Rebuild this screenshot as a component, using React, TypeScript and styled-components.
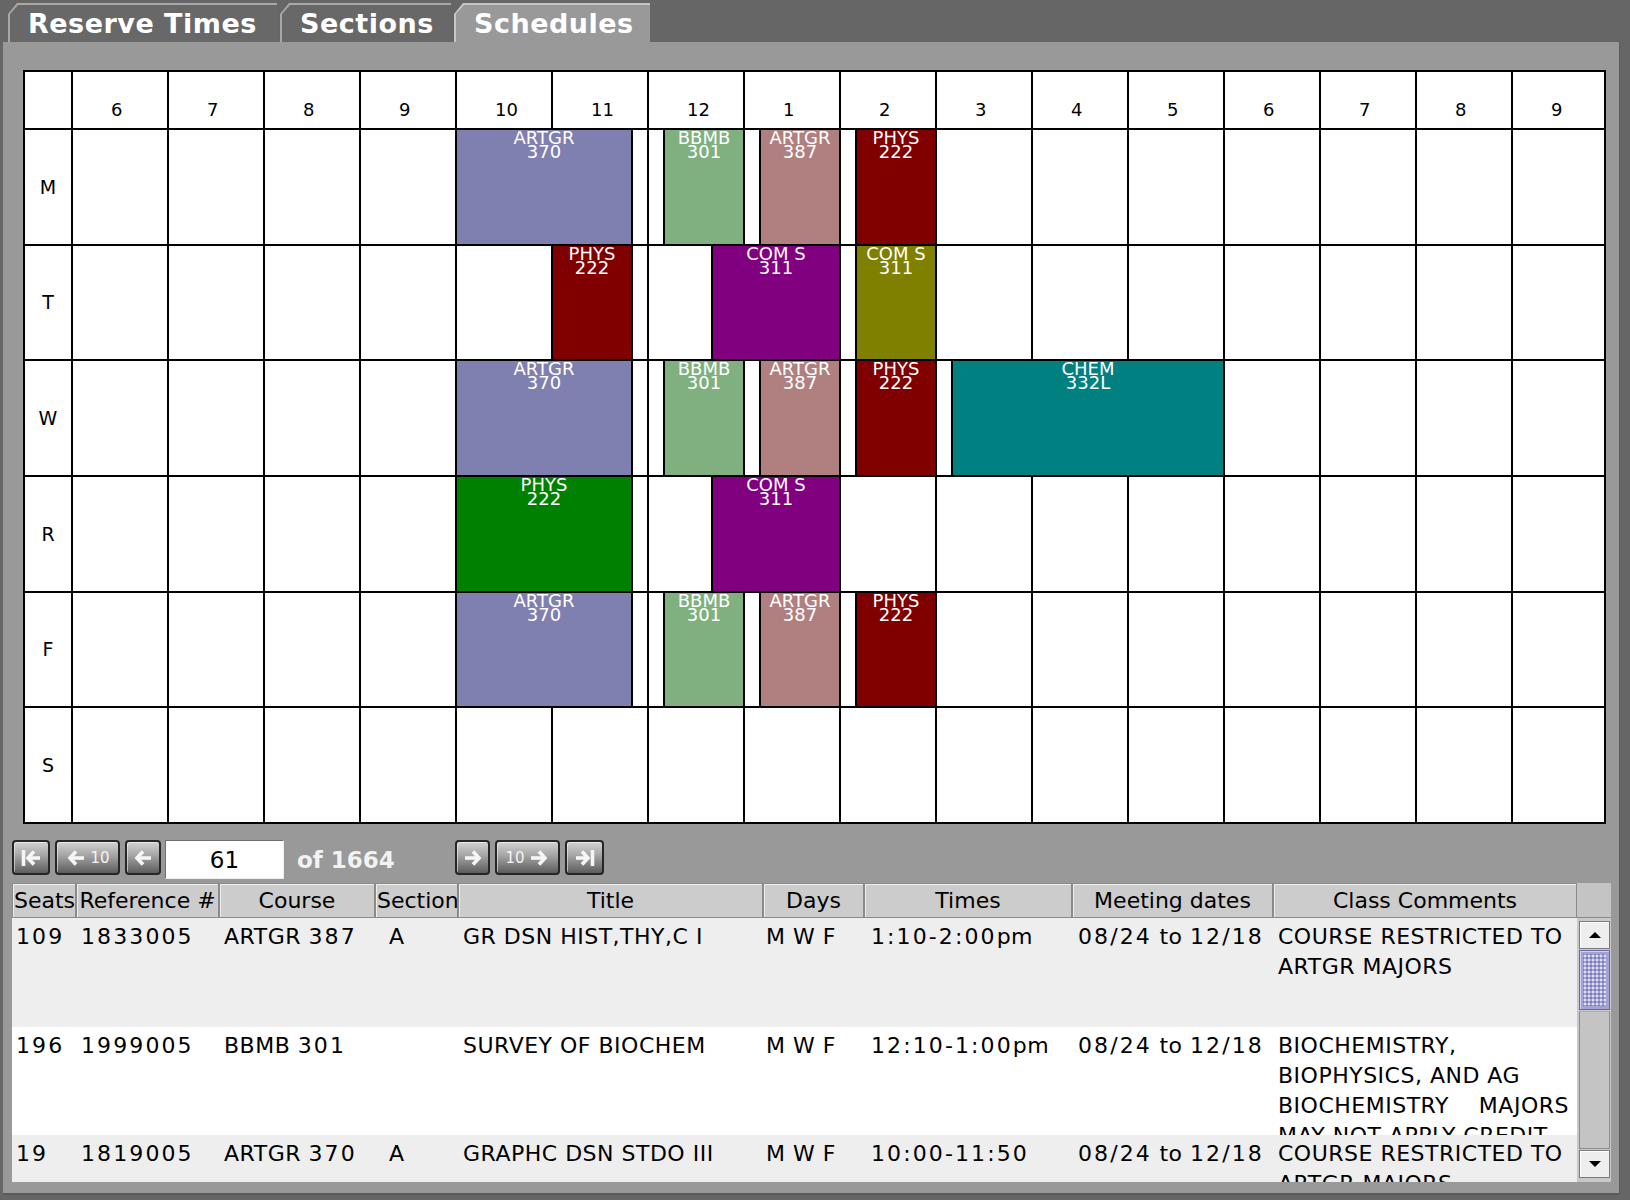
import React from 'react';
import styled, { createGlobalStyle } from 'styled-components';

const GlobalStyle = createGlobalStyle`
  html, body { margin: 0; padding: 0; background: #666666; }
  body { width: 1630px; height: 1200px; overflow: hidden; font-family: "DejaVu Sans", sans-serif; }
  #root { width: 1630px; height: 1200px; }
`;

const Window = styled.div`
  width: 1630px;
  height: 1200px;
  display: flex;
  flex-direction: column;
  background: #666666;
`;

const TabStrip = styled.div`
  display: flex;
  align-items: flex-end;
  gap: 3px;
  height: 42px;
  box-sizing: border-box;
  padding: 3px 0 0 8px;
`;

const TabFrame = styled.div<{ $w: number; $active?: boolean }>`
  width: ${(p) => p.$w}px;
  height: 39px;
  box-sizing: border-box;
  padding: 2px 0 0 2px;
  background: ${(p) => (p.$active ? '#c6c6c6' : '#a8a8a8')};
  clip-path: polygon(0 11px, 9px 0, 100% 0, 100% 100%, 0 100%);
`;

const TabFace = styled.div<{ $active?: boolean }>`
  height: 100%;
  box-sizing: border-box;
  background: ${(p) => (p.$active ? '#999999' : '#686868')};
  clip-path: polygon(0 9px, 8px 0, 100% 0, 100% 100%, 0 100%);
  display: flex;
  align-items: center;
  padding: 0 0 1px 18px;
  color: #ffffff;
  font: bold 27px "DejaVu Sans", sans-serif;
  letter-spacing: 0.5px;
  white-space: nowrap;
`;

const Panel = styled.div`
  margin-left: 3px;
  width: 1617px;
  height: 1153px;
  box-sizing: border-box;
  background: #999999;
  border-right: 1px solid #5a5a5a;
  border-bottom: 2px solid #5a5a5a;
  padding-top: 28px;
  display: flex;
  flex-direction: column;
`;

/* ---------- schedule grid ---------- */

const GRID_W = 1583;
const GRID_H = 754;
const COL_W = 94;
const P = COL_W + 2;
const ROW_H = (GRID_H - 4 - 56 - 12) / 6;
const Q = ROW_H + 2;

const Schedule = styled.div`
  position: relative;
  margin-left: 20px;
  width: ${GRID_W}px;
  height: ${GRID_H}px;
  box-sizing: border-box;
  padding: 2px;
  gap: 2px;
  display: grid;
  grid-template-columns: 46px repeat(15, ${COL_W}px) 1fr;
  grid-template-rows: 56px repeat(6, 1fr);
  background: #000000;
`;

const Cell = styled.div`
  background: #ffffff;
`;

const HourCell = styled(Cell)`
  display: flex;
  align-items: flex-end;
  justify-content: flex-start;
  padding: 0 0 9px 38px;
  box-sizing: border-box;
  font: 18px "DejaVu Sans", sans-serif;
  line-height: 18px;
  color: #000;
`;

const DayCell = styled(Cell)`
  display: flex;
  align-items: center;
  justify-content: center;
  font: 19px "DejaVu Sans", sans-serif;
  color: #000;
`;

const CourseBlock = styled.div<{ $bg: string }>`
  position: absolute;
  box-sizing: border-box;
  border: 2px solid #000;
  background: ${(p) => p.$bg};
  color: #ffffff;
  font: 18px "DejaVu Sans", sans-serif;
  line-height: 14px;
  padding-top: 1px;
  text-align: center;
  white-space: pre;
  overflow: hidden;
`;

/* ---------- navigation ---------- */

const NavBar = styled.div`
  display: flex;
  align-items: flex-start;
  margin: 16px 0 0 9px;
  height: 39px;
`;

const NavButton = styled.div<{ $w: number; $ml?: number }>`
  width: ${(p) => p.$w}px;
  height: 35px;
  margin-left: ${(p) => p.$ml ?? 0}px;
  box-sizing: border-box;
  border: 2px solid #262626;
  border-radius: 4px;
  background: linear-gradient(to bottom, #d2d2d2 0%, #a9a9a9 40%, #7c7c7c 75%, #5e5e5e 100%);
  box-shadow: inset 1px 1px 0 rgba(255, 255, 255, 0.5);
  display: flex;
  align-items: center;
  justify-content: center;
  gap: 3px;
  color: #f4f4f4;
  font: 15px "DejaVu Sans", sans-serif;
`;

const PageField = styled.div`
  width: 119px;
  height: 39px;
  margin-left: 4px;
  box-sizing: border-box;
  background: #ffffff;
  border: 1px solid #6e6e6e;
  border-right-color: #eeeeee;
  border-bottom-color: #eeeeee;
  display: flex;
  align-items: center;
  justify-content: center;
  font: 23px "DejaVu Sans", sans-serif;
  color: #000;
`;

const PageCount = styled.div`
  width: 171px;
  box-sizing: border-box;
  padding: 7px 0 0 13px;
  color: #f2f2f2;
  font: bold 23px "DejaVu Sans", sans-serif;
  white-space: nowrap;
`;

/* ---------- results table ---------- */

const Table = styled.div`
  margin: 4px 0 0 9px;
  width: 1599px;
  display: flex;
  flex-direction: column;
`;

const HeaderRow = styled.div`
  display: flex;
  height: 35px;
`;

const HeaderCell = styled.div<{ $w: number }>`
  width: ${(p) => p.$w}px;
  flex: none;
  box-sizing: border-box;
  background: #cccccc;
  border: 1px solid #8a8a8a;
  box-shadow: inset 1px 1px 0 #eeeeee;
  overflow: hidden;
  white-space: nowrap;
  text-align: center;
  padding: 3px 1px 0 1px;
  font: 22px "DejaVu Sans", sans-serif;
  line-height: 28px;
  color: #000;
`;

const HeaderCorner = styled.div`
  flex: 1;
  background: #c4c4c4;
  border-bottom: 1px solid #8a8a8a;
`;

const Body = styled.div`
  display: flex;
  height: 264px;
`;

const Rows = styled.div`
  width: 1565px;
  flex: none;
  overflow: hidden;
  display: flex;
  flex-direction: column;
`;

const Row = styled.div<{ $h: number; $bg: string }>`
  height: ${(p) => p.$h}px;
  flex: none;
  display: flex;
  background: ${(p) => p.$bg};
`;

const DataCell = styled.div<{ $w: number; $indent: number }>`
  width: ${(p) => p.$w}px;
  flex: none;
  box-sizing: border-box;
  padding: 4px 0 0 ${(p) => p.$indent}px;
  overflow: hidden;
  white-space: pre;
  font: 22px "DejaVu Sans", sans-serif;
  letter-spacing: 0.5px;
  line-height: 30px;
  color: #000;
`;

const Num = styled.span`
  letter-spacing: 2.1px;
`;

const ScrollBar = styled.div`
  flex: 1;
  box-sizing: border-box;
  background: #c8c8c8;
  padding: 3px 1px 4px 2px;
  display: flex;
  flex-direction: column;
`;

const ScrollButton = styled.div`
  height: 28px;
  flex: none;
  box-sizing: border-box;
  background: #eeeeee;
  border: 1px solid #7a7a7a;
  box-shadow: inset 1px 1px 0 #ffffff;
  display: flex;
  align-items: center;
  justify-content: center;
`;

const Triangle = styled.div<{ $up?: boolean }>`
  width: 0;
  height: 0;
  border-left: 6px solid transparent;
  border-right: 6px solid transparent;
  ${(p) => (p.$up ? 'border-bottom: 6px solid #000;' : 'border-top: 6px solid #000;')}
`;

const Thumb = styled.div`
  height: 60px;
  flex: none;
  margin-top: 1px;
  box-sizing: border-box;
  border: 1px solid #6a6aa0;
  background-color: #a2a2d4;
  background-image: radial-gradient(circle, rgba(230, 230, 255, 0.9) 0.7px, transparent 1px),
    radial-gradient(circle, rgba(100, 100, 160, 0.6) 0.7px, transparent 1px);
  background-size: 4px 4px, 4px 4px;
  background-position: 3px 3px, 5px 5px;
  box-shadow: inset 1px 1px 0 #d0d0f0, inset 0 0 0 3px #a2a2d4;
`;

const Track = styled.div`
  flex: 1;
  box-sizing: border-box;
  margin: 1px 0;
  background: #c4c4c4;
  border: 1px solid #8c8c8c;
  border-top-color: #b0b0b0;
`;

/* ---------- icons ---------- */

const ArrowIcon: React.FC<{ dir: 'left' | 'right'; bar?: boolean }> = ({ dir, bar }) => (
  <svg width="22" height="22" viewBox="0 0 22 22" style={{ transform: dir === 'right' ? 'scaleX(-1)' : undefined }}>
    <g stroke="#f6f6f6" strokeWidth="3.6" fill="none" strokeLinecap="butt" strokeLinejoin="miter">
      {bar && <path d="M3.5 3 V19" />}
      <path d={bar ? 'M8 11 H20' : 'M5 11 H19'} />
      <path d={bar ? 'M14 4.5 L8 11 L14 17.5' : 'M11 4.5 L5 11 L11 17.5'} />
    </g>
  </svg>
);

/* ---------- data ---------- */

const HOURS = ['6', '7', '8', '9', '10', '11', '12', '1', '2', '3', '4', '5', '6', '7', '8', '9'];
const DAYS = ['M', 'T', 'W', 'R', 'F', 'S'];

type Slot = { day: number; from: string; to: string; label: string; color: string };

const toOffset = (t: string) => {
  const [h, m] = t.split(':').map(Number);
  return h - 6 + m / 60;
};

const MWF: Omit<Slot, 'day'>[] = [
  { from: '10:00', to: '11:50', label: 'ARTGR\n370', color: '#8080b0' },
  { from: '12:10', to: '13:00', label: 'BBMB\n301', color: '#80b080' },
  { from: '13:10', to: '14:00', label: 'ARTGR\n387', color: '#b08080' },
  { from: '14:10', to: '15:00', label: 'PHYS\n222', color: '#800000' },
];

const SLOTS: Slot[] = [
  ...[0, 2, 4].flatMap((day) => MWF.map((s) => ({ ...s, day }))),
  { day: 2, from: '15:10', to: '18:00', label: 'CHEM\n332L', color: '#008080' },
  { day: 1, from: '11:00', to: '11:50', label: 'PHYS\n222', color: '#800000' },
  { day: 1, from: '12:40', to: '14:00', label: 'COM S\n311', color: '#800080' },
  { day: 1, from: '14:10', to: '15:00', label: 'COM S\n311', color: '#808000' },
  { day: 3, from: '10:00', to: '11:50', label: 'PHYS\n222', color: '#008000' },
  { day: 3, from: '12:40', to: '14:00', label: 'COM S\n311', color: '#800080' },
];

const COLUMNS = [
  { title: 'Seats', w: 64, indent: 4 },
  { title: 'Reference #', w: 143, indent: 5 },
  { title: 'Course', w: 156, indent: 5 },
  { title: 'Section', w: 83, indent: 14 },
  { title: 'Title', w: 305, indent: 5 },
  { title: 'Days', w: 101, indent: 3 },
  { title: 'Times', w: 208, indent: 7 },
  { title: 'Meeting dates', w: 201, indent: 6 },
  { title: 'Class Comments', w: 304, indent: 5 },
];

const ROWS = [
  {
    h: 109,
    bg: '#eeeeee',
    cells: ['109', '1833005', 'ARTGR 387', 'A', 'GR DSN HIST,THY,C I', 'M W F', '1:10-2:00pm', '08/24 to 12/18', 'COURSE RESTRICTED TO\nARTGR MAJORS'],
  },
  {
    h: 108,
    bg: '#ffffff',
    cells: ['196', '1999005', 'BBMB 301', '', 'SURVEY OF BIOCHEM', 'M W F', '12:10-1:00pm', '08/24 to 12/18', 'BIOCHEMISTRY,\nBIOPHYSICS, AND AG\nBIOCHEMISTRY    MAJORS\nMAY NOT APPLY CREDIT'],
  },
  {
    h: 60,
    bg: '#eeeeee',
    cells: ['19', '1819005', 'ARTGR 370', 'A', 'GRAPHC DSN STDO III', 'M W F', '10:00-11:50', '08/24 to 12/18', 'COURSE RESTRICTED TO\nARTGR MAJORS'],
  },
];

const TABS = [
  { label: 'Reserve Times', w: 269 },
  { label: 'Sections', w: 171 },
  { label: 'Schedules', w: 196, active: true },
];

const CellText: React.FC<{ text: string }> = ({ text }) => (
  <>
    {text.split(/([0-9:/-]+)/).map((part, i) =>
      /^[0-9:/-]+$/.test(part) ? <Num key={i}>{part}</Num> : <React.Fragment key={i}>{part}</React.Fragment>
    )}
  </>
);

export default function App() {
  return (
    <Window>
      <GlobalStyle />
      <TabStrip>
        {TABS.map((t) => (
          <TabFrame key={t.label} $w={t.w} $active={t.active}>
            <TabFace $active={t.active}>{t.label}</TabFace>
          </TabFrame>
        ))}
      </TabStrip>
      <Panel>
        <Schedule>
          <Cell />
          {HOURS.map((h, i) => (
            <HourCell key={`h${i}`}>{h}</HourCell>
          ))}
          {DAYS.map((d) => (
            <React.Fragment key={d}>
              <DayCell>{d}</DayCell>
              {HOURS.map((_, i) => (
                <Cell key={`${d}${i}`} />
              ))}
            </React.Fragment>
          ))}
          {SLOTS.map((s, i) => {
            const a = toOffset(s.from);
            const b = toOffset(s.to);
            return (
              <CourseBlock
                key={i}
                $bg={s.color}
                style={{
                  left: 48 + a * P,
                  width: (b - a) * P + 2,
                  top: 58 + s.day * Q,
                  height: Q + 2,
                }}
              >
                {s.label}
              </CourseBlock>
            );
          })}
        </Schedule>

        <NavBar>
          <NavButton $w={38}>
            <ArrowIcon dir="left" bar />
          </NavButton>
          <NavButton $w={65} $ml={5}>
            <ArrowIcon dir="left" />
            <span>10</span>
          </NavButton>
          <NavButton $w={36} $ml={5}>
            <ArrowIcon dir="left" />
          </NavButton>
          <PageField>61</PageField>
          <PageCount>of 1664</PageCount>
          <NavButton $w={35}>
            <ArrowIcon dir="right" />
          </NavButton>
          <NavButton $w={65} $ml={5}>
            <span>10</span>
            <ArrowIcon dir="right" />
          </NavButton>
          <NavButton $w={39} $ml={5}>
            <ArrowIcon dir="right" bar />
          </NavButton>
        </NavBar>

        <Table>
          <HeaderRow>
            {COLUMNS.map((c) => (
              <HeaderCell key={c.title} $w={c.w}>
                {c.title}
              </HeaderCell>
            ))}
            <HeaderCorner />
          </HeaderRow>
          <Body>
            <Rows>
              {ROWS.map((r, ri) => (
                <Row key={ri} $h={r.h} $bg={r.bg}>
                  {r.cells.map((c, ci) => (
                    <DataCell key={ci} $w={COLUMNS[ci].w} $indent={COLUMNS[ci].indent}>
                      <CellText text={c} />
                    </DataCell>
                  ))}
                </Row>
              ))}
            </Rows>
            <ScrollBar>
              <ScrollButton>
                <Triangle $up />
              </ScrollButton>
              <Thumb />
              <Track />
              <ScrollButton>
                <Triangle />
              </ScrollButton>
            </ScrollBar>
          </Body>
        </Table>
      </Panel>
    </Window>
  );
}
